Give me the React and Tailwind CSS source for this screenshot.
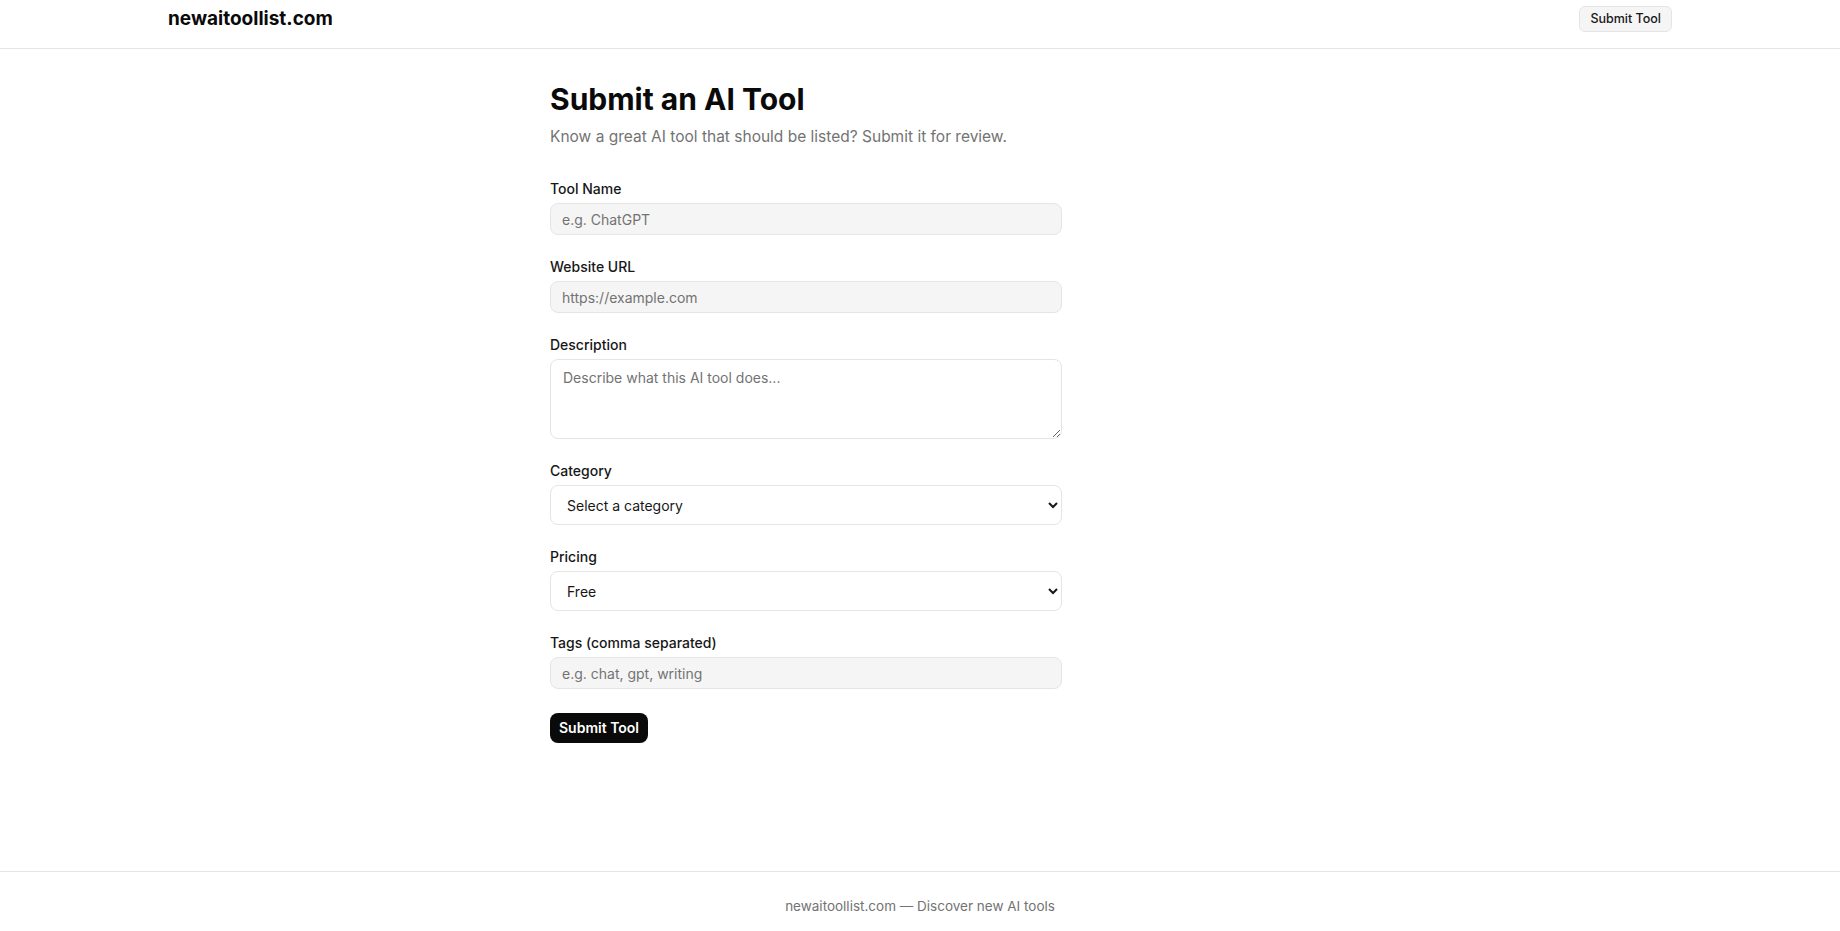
import React from "react";

const inputCls =
  "block w-full h-8 rounded-lg border border-neutral-200 bg-neutral-100 px-[11px] text-sm text-neutral-900 placeholder:text-neutral-500 outline-none";

const Field = ({ label, children }) => (
  <div>
    <label className="mb-1 block text-sm font-medium leading-5 text-neutral-900">{label}</label>
    {children}
  </div>
);

export default function App() {
  return (
    <div className="min-h-screen bg-white text-neutral-900" style={{ fontFamily: "Inter, 'Noto Sans', sans-serif" }}>
      <header className="border-b border-neutral-200">
        <div className="mx-auto flex h-12 max-w-[1536px] items-start justify-between px-4 pt-1.5">
          <a className="text-[19px] font-bold leading-[26px] text-neutral-950">newaitoollist.com</a>
          <button className="h-[26px] rounded-md border border-neutral-200 bg-neutral-100 px-2.5 text-[12.5px] font-medium text-neutral-900">
            Submit Tool
          </button>
        </div>
      </header>

      <main className="mx-auto max-w-3xl px-[14px] pt-8 pb-32">
        <h1 className="text-3xl font-bold text-neutral-950">Submit an AI Tool</h1>
        <p className="mt-2 mb-[30px] text-[15.5px] leading-6 text-neutral-500">
          Know a great AI tool that should be listed? Submit it for review.
        </p>

        <form className="max-w-lg space-y-[22px]">
          <Field label="Tool Name">
            <input className={inputCls} placeholder="e.g. ChatGPT" />
          </Field>
          <Field label="Website URL">
            <input className={inputCls} placeholder="https://example.com" />
          </Field>
          <Field label="Description">
            <textarea
              className="block h-20 w-full rounded-lg border border-neutral-200 bg-white px-3 py-2 text-sm placeholder:text-neutral-500 outline-none"
              placeholder="Describe what this AI tool does..."
            />
          </Field>
          <Field label="Category">
            <select className="block h-10 w-full rounded-lg border border-neutral-200 bg-white px-3 text-sm text-neutral-900 outline-none">
              <option>Select a category</option>
            </select>
          </Field>
          <Field label="Pricing">
            <select className="block h-10 w-full rounded-lg border border-neutral-200 bg-white px-3 text-sm text-neutral-900 outline-none">
              <option>Free</option>
              <option>Freemium</option>
              <option>Paid</option>
            </select>
          </Field>
          <Field label="Tags (comma separated)">
            <input className={inputCls} placeholder="e.g. chat, gpt, writing" />
          </Field>
          <div className="pt-0.5">
            <button type="button" className="h-[30px] rounded-lg bg-neutral-950 px-[9px] text-sm font-semibold text-white">
              Submit Tool
            </button>
          </div>
        </form>
      </main>

      <footer className="border-t border-neutral-200 py-6 text-center text-[13.5px] text-neutral-500">
        newaitoollist.com — Discover new AI tools
      </footer>
    </div>
  );
}
